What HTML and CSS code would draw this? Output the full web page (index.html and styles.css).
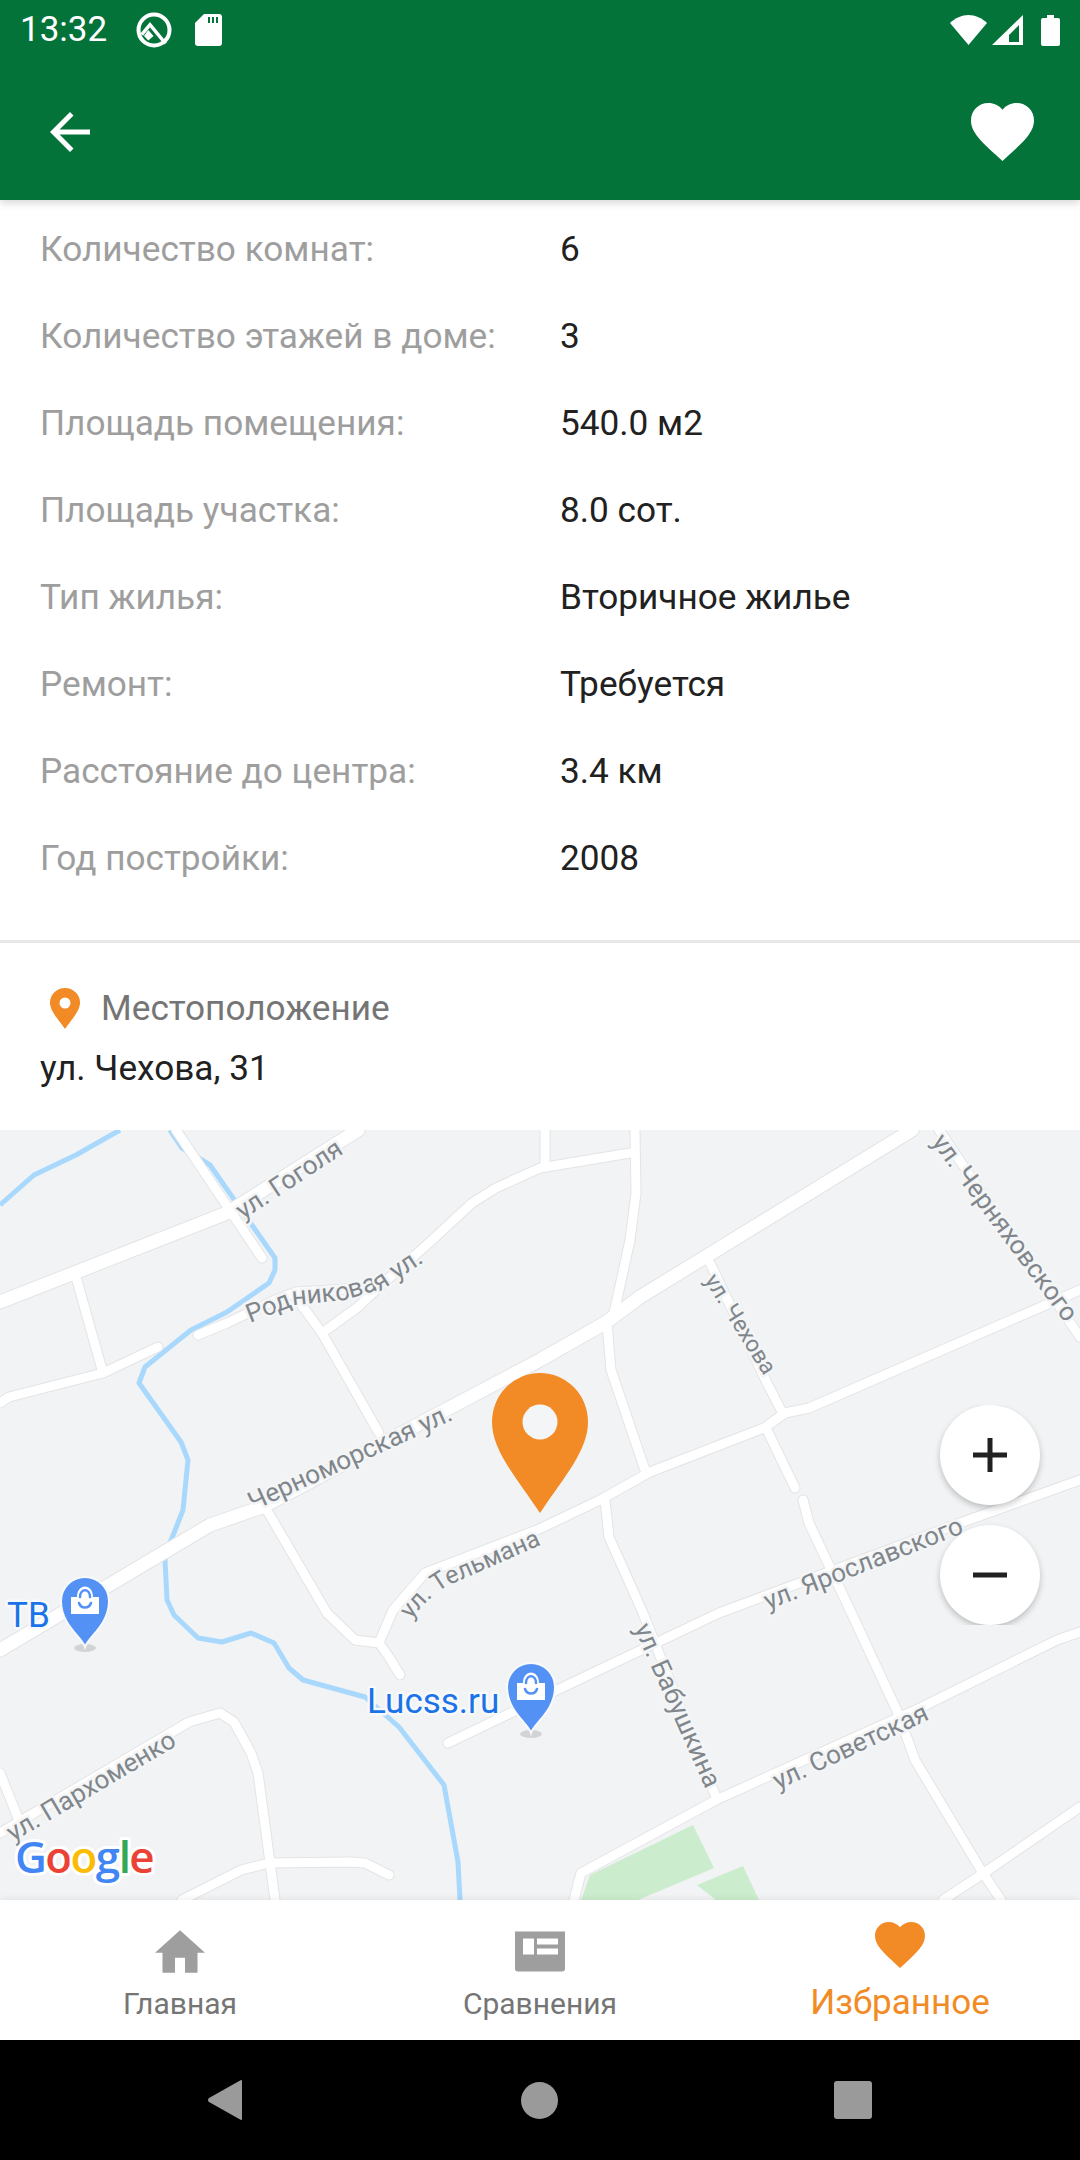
FILE: index.html
```html
<!DOCTYPE html>
<html lang="ru">
<head>
<meta charset="utf-8">
<title>Объект</title>
<link rel="stylesheet" href="styles.css">
</head>
<body>
<div class="screen">
  <header class="appbar">
    <div class="statusbar">
      <span class="time">13:32</span>
      <svg class="st-q" viewBox="0 0 36 36"><circle cx="18" cy="18" r="15.500" class="ring"/><path class="ringline" d="M5.700 22.700 L14 12.700 L29.500 31.500"/><path class="fillw" d="M12.300 18 L17.500 24 L12.300 28.500 L8 24 Z"/></svg>
      <svg class="st-sd" viewBox="0 0 27 32"><path class="fillw" d="M9 0 H24 A3 3 0 0 1 27 3 V29 A3 3 0 0 1 24 32 H3 A3 3 0 0 1 0 29 V9 Z"/><path class="cut" d="M13 3 H15 V9 H13 Z M17 3 H19 V9 H17 Z M21 3 H23 V9 H21 Z"/></svg>
      <span class="grow"></span>
      <svg class="st-wifi" viewBox="0 0 37 30"><path class="fillw" d="M18.500 30 L0 8 C5 3 12 0 18.500 0 C25 0 32 3 37 8 Z"/></svg>
      <svg class="st-signal" viewBox="0 0 31 30"><path class="fillw" fill-rule="evenodd" d="M31 0 V30 H0 Z M27 10 L17 20 V27 H27 Z"/></svg>
      <svg class="st-batt" viewBox="0 0 19 31"><path class="fillw" d="M6 0 H13 V3 H17 A2 2 0 0 1 19 5 V29 A2 2 0 0 1 17 31 H2 A2 2 0 0 1 0 29 V5 A2 2 0 0 1 2 3 H6 Z"/></svg>
    </div>
    <div class="toolbar">
      <svg class="back" viewBox="0 0 40 40"><path d="M40 17.500 H9.600 L23.500 3.500 L20 0 L0 20 L20 40 L23.500 36.500 L9.600 22.500 H40 Z" class="fillw"/></svg>
      <svg class="fav" viewBox="2 3 20 18.350"><path class="fillw" d="M12 21.350l-1.450-1.320C5.400 15.360 2 12.280 2 8.500 2 5.420 4.420 3 7.500 3c1.740 0 3.410.81 4.500 2.090C13.090 3.810 14.760 3 16.500 3 19.580 3 22 5.420 22 8.500c0 3.780-3.400 6.860-8.550 11.540L12 21.350z"/></svg>
    </div>
  </header>

  <main class="content">
    <section class="specs">
      <div class="row"><span class="key">Количество комнат:</span><span class="val">6</span></div>
      <div class="row"><span class="key">Количество этажей в доме:</span><span class="val">3</span></div>
      <div class="row"><span class="key">Площадь помещения:</span><span class="val">540.0 м2</span></div>
      <div class="row"><span class="key">Площадь участка:</span><span class="val">8.0 сот.</span></div>
      <div class="row"><span class="key">Тип жилья:</span><span class="val">Вторичное жилье</span></div>
      <div class="row"><span class="key">Ремонт:</span><span class="val">Требуется</span></div>
      <div class="row"><span class="key">Расстояние до центра:</span><span class="val">3.4 км</span></div>
      <div class="row"><span class="key">Год постройки:</span><span class="val">2008</span></div>
    </section>
    <section class="location">
      <div class="loc-head">
        <svg class="loc-pin" viewBox="0 0 30 41"><path class="orange" fill-rule="evenodd" d="M15 41 C8 31 0 23 0 14.500 A15 14.500 0 0 1 30 14.500 C30 23 22 31 15 41 Z M15 9.500 A5.500 5.500 0 1 0 15 20.500 A5.500 5.500 0 1 0 15 9.500 Z"/></svg>
        <span class="loc-title">Местоположение</span>
      </div>
      <div class="loc-addr">ул. Чехова, 31</div>
    </section>
    <section class="map">
      <svg class="map-svg" viewBox="0 1130 1080 770">
        <defs>
          <g id="water">
            <path d="M120 1130 L76 1155 L34 1175 L0 1205"/>
            <path d="M170 1130 L182 1148 L210 1165 L275 1258 L275 1270 L269 1283 L227 1312 L191 1330 L145 1367 L139 1383 L181 1442 L188 1460 L183 1510 L170 1543 L165 1560 L167 1600 L174 1615 L198 1638 L222 1642 L251 1633 L274 1643 L289 1668 L303 1680 L365 1697 L399 1727 L444 1785 L458 1862 L460 1900"/>
          </g>
          <g id="roads-thick">
            <path d="M358 1130 L227 1213 L0 1302"/>
            <path d="M262 1507 L210 1525 L0 1650"/>
            <path d="M262 1507 L540 1360 L605 1323 L640 1297 L912 1130"/>
          </g>
          <g id="roads-thin">
            <path d="M176 1130 L262 1258"/>
            <path d="M76 1277 L103 1373"/>
            <path d="M0 1403 L9 1397 L103 1373 L158 1347"/>
            <path d="M198 1335 L227 1323 L248 1313 L275 1300 L296 1292 L379 1287 L430 1242 L472 1203 L496 1188 L540 1168 L630 1153"/>
            <path d="M322 1333 L358 1307 L379 1287"/>
            <path d="M300 1303 L322 1333 L379 1433"/>
            <path d="M545 1130 V1165"/>
            <path d="M635 1130 L636 1193 L630 1240 L614 1313 L607 1323 L611 1370 L645 1470"/>
            <path d="M400 1675 L389 1657 L379 1643 L355 1640 L327 1613 L265 1507"/>
            <path d="M379 1643 L393 1610 L425 1573 L537 1530 L600 1500 L650 1472 L764 1428 L785 1413 L809 1408 L1080 1290"/>
            <path d="M605 1500 L609 1537 L643 1613 L716 1797"/>
            <path d="M448 1743 L517 1710 L557 1690 L719 1613 L960 1523 L1080 1480"/>
            <path d="M574 1900 L581 1873 L716 1800 L922 1707 L1057 1640 L1080 1632"/>
            <path d="M767 1430 L795 1488"/>
            <path d="M803 1500 L809 1523 L850 1610 L898 1713 L915 1760 L981 1870 L1001 1900"/>
            <path d="M1080 1807 L984 1873 L943 1900"/>
            <path d="M710 1263 L767 1383 L781 1410"/>
            <path d="M939 1130 L1080 1337"/>
            <path d="M0 1833 L189 1722 L220 1713 L234 1722 L251 1753 L258 1773 L275 1900"/>
            <path d="M0 1773 L20 1823"/>
            <path d="M182 1900 L241 1870 L269 1863 L351 1862 L365 1863 L389 1875"/>
          </g>
          <g id="poi">
            <ellipse class="poi-shadow" cx="0" cy="47" rx="11" ry="4"/>
            <path class="poi-body" d="M0 46 C-3 36 -24 24 -24 0 A24 24 0 0 1 24 0 C24 24 3 36 0 46 Z"/>
            <path class="poi-bag" d="M-14 -4 H-8 C-8 -18 8 -18 8 -4 H14 V13 H-14 Z"/>
            <path class="poi-mark" d="M-5 -4 C-5 -13 5 -13 5 -4 M-6 2 C-4 8 4 8 6 2"/>
          </g>
          <path id="rod-path" d="M250 1323 L296 1305 L345 1300 L385 1288 L430 1258"/>
          <path id="tel-path" d="M411 1620 Q428 1597 447 1586 L552 1540"/>
        </defs>

        <path class="park" d="M693 1825 L714 1868 L638 1900 L581 1900 L590 1875 Z"/>
        <path class="park" d="M743 1866 L759 1900 L716 1900 L697 1885 Z"/>

        <use href="#water" class="water"/>

        <use href="#roads-thick" class="casing-thick"/>
        <use href="#roads-thin" class="casing-thin"/>
        <use href="#roads-thick" class="road-thick"/>
        <use href="#roads-thin" class="road-thin"/>

        <text class="lbl" transform="translate(243 1220) rotate(-33.500)">ул. Гоголя</text>
        <text class="lbl"><textPath href="#rod-path">Родниковая ул.</textPath></text>
        <text class="lbl" transform="translate(253 1511) rotate(-24.500)">Черноморская ул.</text>
        <text class="lbl lbl-md"><textPath href="#tel-path">ул. Тельмана</textPath></text>
        <text class="lbl lbl-sm" transform="translate(704 1280) rotate(58)">ул. Чехова</text>
        <text class="lbl" transform="translate(931 1142) rotate(53.500)">ул. Черняховского</text>
        <text class="lbl" transform="translate(768 1610) rotate(-21.500)">ул. Ярославского</text>
        <text class="lbl" transform="translate(634 1628) rotate(66)">ул. Бабушкина</text>
        <text class="lbl" transform="translate(778 1790) rotate(-25)">ул. Советская</text>
        <text class="lbl" transform="translate(13 1842) rotate(-30.500)">ул. Пархоменко</text>

        <use href="#poi" transform="translate(85 1601)"/>
        <use href="#poi" transform="translate(531 1687)"/>
        <text class="poi-lbl" x="7" y="1627">ТВ</text>
        <text class="poi-lbl" x="367" y="1713">Lucss.ru</text>

        <text class="google" x="15" y="1873"><tspan class="g-b">G</tspan><tspan class="g-r">o</tspan><tspan class="g-y">o</tspan><tspan class="g-b">g</tspan><tspan class="g-g">l</tspan><tspan class="g-r">e</tspan></text>

        <path class="pin" fill-rule="evenodd" d="M540 1513 C515 1476 492 1450 492 1422 A48 49 0 1 1 588 1422 C588 1450 565 1476 540 1513 Z"/>
        <circle class="pin-hole" cx="540" cy="1422" r="17.500"/>
      </svg>
      <div class="zoom-col">
        <div class="zoom-btn"><svg class="zoom-ico" viewBox="0 0 34 34"><path d="M14.500 0 H19.500 V14.500 H34 V19.500 H19.500 V34 H14.500 V19.500 H0 V14.500 H14.500 Z"/></svg></div>
        <div class="zoom-btn"><svg class="zoom-ico" viewBox="0 0 34 34"><path d="M0 14.500 H34 V19.500 H0 Z"/></svg></div>
      </div>
    </section>
  </main>

  <nav class="tabs">
    <div class="tab">
      <svg class="tab-ico" viewBox="2 3 20 17"><path d="M10 20v-6h4v6h5v-8h3L12 3 2 12h3v8z"/></svg>
      <span class="tab-lbl">Главная</span>
    </div>
    <div class="tab">
      <svg class="tab-ico" viewBox="0 0 50 40"><path fill-rule="evenodd" d="M0 0 H50 V37 A3 3 0 0 1 47 40 H3 A3 3 0 0 1 0 37 Z M8 7 V23 H19 V7 Z M22 7 V13 H43 V7 Z M22 17 V23 H43 V17 Z"/></svg>
      <span class="tab-lbl">Сравнения</span>
    </div>
    <div class="tab active">
      <svg class="tab-ico heart" viewBox="2 3 20 18.350"><path d="M12 21.350l-1.450-1.320C5.400 15.360 2 12.280 2 8.500 2 5.420 4.420 3 7.500 3c1.740 0 3.410.81 4.500 2.090C13.090 3.810 14.760 3 16.500 3 19.580 3 22 5.420 22 8.500c0 3.780-3.400 6.860-8.550 11.540L12 21.350z"/></svg>
      <span class="tab-lbl">Избранное</span>
    </div>
  </nav>

  <footer class="sysnav">
    <svg class="sys-back" viewBox="0 0 34 40"><path d="M33 0 A1 1 0 0 1 34 1 V39 A1 1 0 0 1 33 40 L1 22 A2.500 2.500 0 0 1 1 18 Z"/></svg>
    <span class="sys-home"></span>
    <span class="sys-recent"></span>
  </footer>
</div>
</body>
</html>
```

FILE: styles.css
```css
* { box-sizing: border-box; }
html, body { margin: 0; padding: 0; background: #fff; }
body { font-family: Roboto, "Noto Sans", sans-serif; }

.screen { width: 1080px; height: 2160px; display: flex; flex-direction: column; overflow: hidden; }

.appbar { flex: 0 0 200px; background: #04733a; display: flex; flex-direction: column; box-shadow: 0 3px 8px rgba(0,0,0,.16); position: relative; z-index: 2; }
.statusbar { flex: 0 0 63px; display: flex; align-items: center; padding: 0 20px 3px; color: #fff; }
.time { font-size: 35px; width: 116px; line-height: 60px; }
.st-q { width: 36px; height: 36px; }
.st-sd { width: 27px; height: 32px; margin-left: 23px; }
.grow { flex: 1; }
.st-wifi { width: 37px; height: 30px; }
.st-signal { width: 31px; height: 30px; margin-left: 5px; }
.st-batt { width: 19px; height: 31px; margin-left: 18px; }
.fillw { fill: #fff; }
.cut { fill: #04733a; }
.ring { fill: none; stroke: #fff; stroke-width: 4; }
.ringline { fill: none; stroke: #fff; stroke-width: 3.500; }

.toolbar { flex: 1; display: flex; align-items: center; justify-content: space-between; padding: 0 46px 0 50px; }
.back { width: 40px; height: 40px; }
.fav { width: 63px; height: 58px; }

.content { flex: 1; display: flex; flex-direction: column; min-height: 0; }

.specs { flex: 0 0 743px; padding: 5px 0 0 40px; border-bottom: 3px solid #e8e8e8; }
.row { height: 87px; display: grid; grid-template-columns: 520px 1fr; align-items: center; font-size: 35.200px; }
.key { color: #9e9e9e; }
.val { color: #212121; }

.location { flex: 0 0 187px; padding: 43px 40px 0; }
.loc-head { display: flex; align-items: center; height: 44px; padding-left: 10px; gap: 21px; }
.loc-pin { width: 30px; height: 41px; }
.orange { fill: #f28b25; }
.loc-title { font-size: 35.200px; color: #757575; }
.loc-addr { font-size: 35.200px; color: #212121; margin-top: 16px; line-height: 44px; }

.map { flex: 1; position: relative; background: #f1f3f4; min-height: 0; overflow: hidden; }
.map-svg { display: block; width: 1080px; height: 770px; }
.water { fill: none; stroke: #a9d8fd; stroke-width: 5; stroke-linejoin: round; stroke-linecap: butt; }
.park { fill: #ccedcd; }
.casing-thick, .casing-thin, .road-thick, .road-thin { fill: none; stroke-linecap: round; stroke-linejoin: round; }
.casing-thick { stroke: #e3e4e6; stroke-width: 15; }
.casing-thin { stroke: #e3e4e6; stroke-width: 11; }
.road-thick { stroke: #fff; stroke-width: 13; }
.road-thin { stroke: #fff; stroke-width: 9; }

.lbl { font-family: Roboto, sans-serif; font-size: 26px; fill: #80868b; stroke: #f4f5f6; stroke-width: 5px; paint-order: stroke; stroke-linejoin: round; }
.lbl-md { font-size: 25px; }
.lbl-sm { font-size: 23px; }
.poi-lbl { font-family: Roboto, sans-serif; font-size: 35px; fill: #1a73e8; stroke: #f8f9fa; stroke-width: 5px; paint-order: stroke; stroke-linejoin: round; }
.google { font-family: "Open Sans", Roboto, sans-serif; font-size: 44px; font-weight: 600; letter-spacing: -1.600px; stroke: #fff; stroke-width: 6px; paint-order: stroke; stroke-linejoin: round; }
.g-b { fill: #4285f4; }
.g-r { fill: #ea4335; }
.g-y { fill: #fbbc05; }
.g-g { fill: #34a853; }

.poi-shadow { fill: rgba(0,0,0,.13); }
.poi-body { fill: #5491f5; stroke: #f8f9fa; stroke-width: 2; }
.poi-bag { fill: #fff; }
.poi-mark { fill: none; stroke: #5491f5; stroke-width: 2.500; stroke-linecap: round; }
.pin { fill: #f28b25; }
.pin-hole { fill: #f4f5f6; }

.zoom-col { position: absolute; left: 930px; top: 275px; width: 120px; height: 220px; overflow: hidden; padding: 0 10px; display: flex; flex-direction: column; gap: 20px; }
.zoom-btn { width: 100px; height: 100px; flex: none; border-radius: 50%; background: #fff; box-shadow: 0 3px 6px rgba(0,0,0,.22); display: flex; align-items: center; justify-content: center; }
.zoom-ico { width: 34px; height: 34px; fill: #212121; }

.tabs { flex: 0 0 140px; background: #fff; display: grid; grid-template-columns: repeat(3, 1fr); position: relative; box-shadow: 0 -2px 5px rgba(0,0,0,.06); }
.tab { display: flex; flex-direction: column; align-items: center; color: #757575; padding-top: 30px; }
.tab-ico { width: 50px; height: 43px; fill: #9e9e9e; }
.tab-lbl { font-size: 30px; line-height: 34px; margin-top: 14px; }
.tab.active { color: #f28b25; padding-top: 22px; }
.tab.active .tab-ico { fill: #f28b25; height: 46px; }
.tab.active .tab-lbl { font-size: 35px; line-height: 40px; margin-top: 15px; }

.sysnav { flex: 0 0 120px; background: #000; display: grid; grid-template-columns: 1fr 1fr 1fr; align-items: center; justify-items: center; padding: 0 70px; }
.sys-back { width: 34px; height: 40px; fill: #9a9a9a; margin-right: 3px; }
.sys-home { width: 37px; height: 37px; border-radius: 50%; background: #9a9a9a; }
.sys-recent { width: 38px; height: 38px; border-radius: 3px; background: #9a9a9a; }
```
